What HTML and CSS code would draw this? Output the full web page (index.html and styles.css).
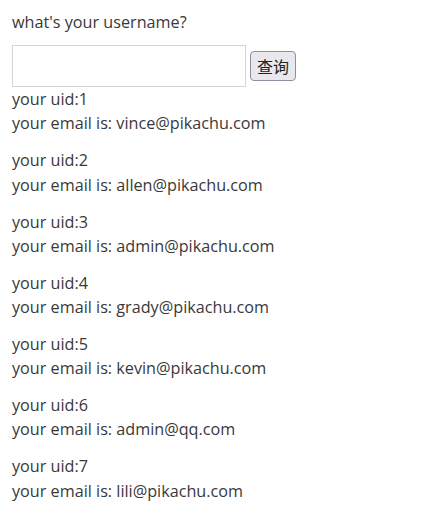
FILE: index.html
```html
<!DOCTYPE html>
<html>
<head>
<meta charset="utf-8">
<link rel="stylesheet" href="styles.css">
</head>
<body>
<div class="page">
  <p class="question">what's your username?</p>
  <form class="search">
    <input class="field" type="text">
    <button class="submit" type="button">查询</button>
  </form>
  <p class="notice">your uid:1<br>your email is: vince@pikachu.com</p>
  <p class="notice">your uid:2<br>your email is: allen@pikachu.com</p>
  <p class="notice">your uid:3<br>your email is: admin@pikachu.com</p>
  <p class="notice">your uid:4<br>your email is: grady@pikachu.com</p>
  <p class="notice">your uid:5<br>your email is: kevin@pikachu.com</p>
  <p class="notice">your uid:6<br>your email is: admin@qq.com</p>
  <p class="notice">your uid:7<br>your email is: lili@pikachu.com</p>
</div>
</body>
</html>
```

FILE: styles.css
```css
html, body {
  margin: 0;
  padding: 0;
  background: #fff;
}
body {
  font-family: "Open Sans", "Noto Sans", sans-serif;
  font-size: 16.2px;
  line-height: 24.2px;
  color: #393939;
}
.page {
  padding: 10px 12px;
}
.question {
  margin: 0 0 11px;
}
.search {
  display: flex;
  align-items: center;
  gap: 4px;
  margin: 0;
}
.field {
  width: 234px;
  height: 42px;
  box-sizing: border-box;
  border: 1px solid #d5d5d5;
  padding: 5px 4px;
  margin: 0;
  font: inherit;
}
.submit {
  height: 30px;
  padding: 0 6px;
  font-family: "Noto Sans CJK SC", sans-serif;
  font-size: 16px;
  color: #222;
  background: #e9e9ed;
  border: 1px solid #8f8f9d;
  border-radius: 4px;
}
.notice {
  margin: 0 0 12.8px;
}
```
